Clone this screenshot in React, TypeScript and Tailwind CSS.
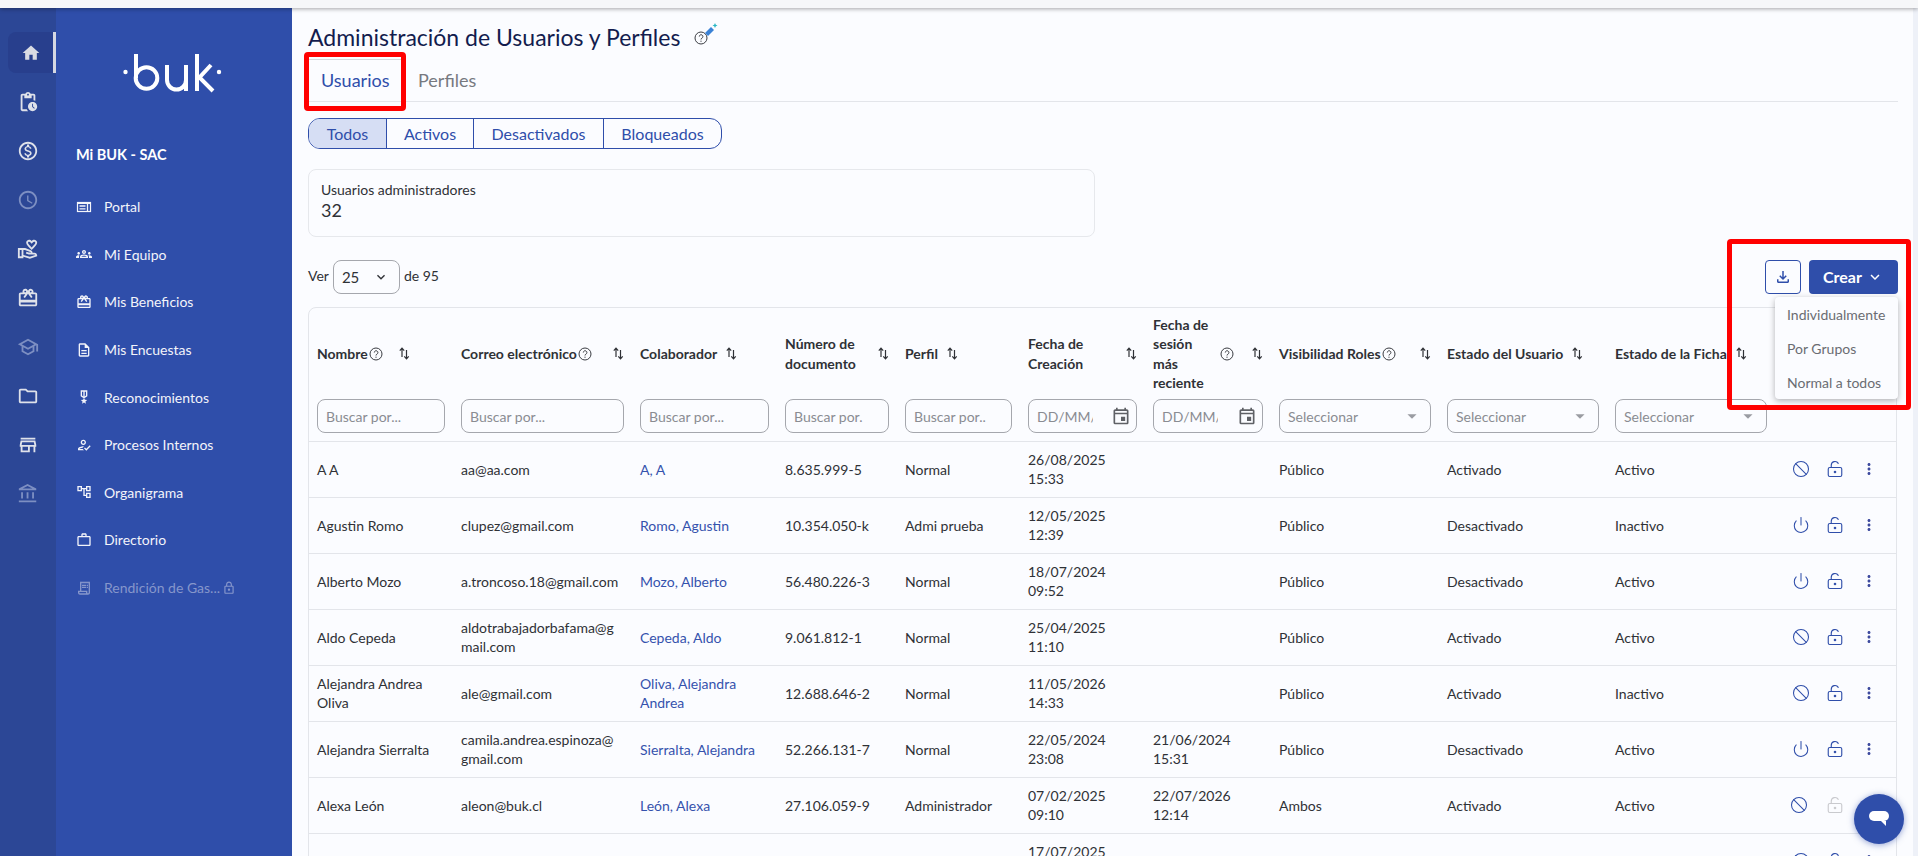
import React from 'react';
import {
  MdHome,
  MdOutlinePendingActions,
  MdOutlineMonetizationOn,
  MdOutlineAccessTime,
  MdOutlineVolunteerActivism,
  MdOutlineCardGiftcard,
  MdOutlineSchool,
  MdOutlineFolder,
  MdOutlineStore,
  MdOutlineAccountBalance,
  MdOutlineGroups,
  MdOutlineDescription,
  MdOutlineMilitaryTech,
  MdOutlineHowToReg,
  MdOutlineAccountTree,
  MdOutlineWorkOutline,
  MdOutlineReceiptLong,
  MdOutlineLock,
  MdMoreVert,
  MdOutlineEvent,
  MdOutlineFileDownload,
  MdKeyboardArrowDown,
  MdArrowDropDown,
} from 'react-icons/md';
import { Ban, Power, LockKeyholeOpen } from 'lucide-react';

const railIcons = [
  { Icon: MdOutlinePendingActions, dim: false },
  { Icon: MdOutlineMonetizationOn, dim: false },
  { Icon: MdOutlineAccessTime, dim: true },
  { Icon: MdOutlineVolunteerActivism, dim: false },
  { Icon: MdOutlineCardGiftcard, dim: false },
  { Icon: MdOutlineSchool, dim: true },
  { Icon: MdOutlineFolder, dim: false },
  { Icon: MdOutlineStore, dim: false },
  { Icon: MdOutlineAccountBalance, dim: true },
];

function PortalIcon({ className = '' }: { size?: number; className?: string }) {
  return (
    <svg width="16" height="16" viewBox="0 0 16 16" fill="none" stroke="currentColor" className={className}>
      <rect x="1.5" y="3.5" width="13" height="9" strokeWidth="1.2" />
      <path d="M1.5 4.2h13" strokeWidth="1.6" />
      <path d="M3.5 7h6M3.5 9.8h6M11.5 5v7" strokeWidth="1.3" />
    </svg>
  );
}

const menuItems = [
  { label: 'Portal', Icon: PortalIcon },
  { label: 'Mi Equipo', Icon: MdOutlineGroups },
  { label: 'Mis Beneficios', Icon: MdOutlineCardGiftcard },
  { label: 'Mis Encuestas', Icon: MdOutlineDescription },
  { label: 'Reconocimientos', Icon: MdOutlineMilitaryTech },
  { label: 'Procesos Internos', Icon: MdOutlineHowToReg },
  { label: 'Organigrama', Icon: MdOutlineAccountTree },
  { label: 'Directorio', Icon: MdOutlineWorkOutline },
];

const rows = [
  { n: 'A A', e: 'aa@aa.com', c: 'A, A', d: '8.635.999-5', p: 'Normal', f: ['26/08/2025', '15:33'], s: [], v: 'Público', u: 'Activado', h: 'Activo', block: true },
  { n: 'Agustin Romo', e: 'clupez@gmail.com', c: 'Romo, Agustin', d: '10.354.050-k', p: 'Admi prueba', f: ['12/05/2025', '12:39'], s: [], v: 'Público', u: 'Desactivado', h: 'Inactivo', block: false },
  { n: 'Alberto Mozo', e: 'a.troncoso.18@gmail.com', c: 'Mozo, Alberto', d: '56.480.226-3', p: 'Normal', f: ['18/07/2024', '09:52'], s: [], v: 'Público', u: 'Desactivado', h: 'Activo', block: false },
  { n: 'Aldo Cepeda', e: 'aldotrabajadorbafama@g\nmail.com', c: 'Cepeda, Aldo', d: '9.061.812-1', p: 'Normal', f: ['25/04/2025', '11:10'], s: [], v: 'Público', u: 'Activado', h: 'Activo', block: true },
  { n: 'Alejandra Andrea Oliva', e: 'ale@gmail.com', c: 'Oliva, Alejandra Andrea', d: '12.688.646-2', p: 'Normal', f: ['11/05/2026', '14:33'], s: [], v: 'Público', u: 'Activado', h: 'Inactivo', block: true },
  { n: 'Alejandra Sierralta', e: 'camila.andrea.espinoza@\ngmail.com', c: 'Sierralta, Alejandra', d: '52.266.131-7', p: 'Normal', f: ['22/05/2024', '23:08'], s: ['21/06/2024', '15:31'], v: 'Público', u: 'Desactivado', h: 'Activo', block: false },
  { n: 'Alexa León', e: 'aleon@buk.cl', c: 'León, Alexa', d: '27.106.059-9', p: 'Administrador', f: ['07/02/2025', '09:10'], s: ['22/07/2026', '12:14'], v: 'Ambos', u: 'Activado', h: 'Activo', block: true, locked: true },
];

function BukLogo() {
  return (
    <svg width="104" height="45" viewBox="0 0 104 45" fill="none" stroke="white" strokeWidth="4">
      <circle cx="2.5" cy="22" r="2.2" fill="white" stroke="none" />
      <path d="M13 4v24" />
      <circle cx="23.5" cy="28" r="10.8" />
      <path d="M44 15v15a9.5 9.5 0 0 0 19 0V15M63 30v11" />
      <path d="M74 4v37M88 15 76.5 27.5 90 41" />
      <circle cx="96" cy="22" r="2.2" fill="white" stroke="none" />
    </svg>
  );
}

function SortIcon({ className = '' }: { className?: string }) {
  return (
    <svg width="12" height="13" viewBox="0 0 12 13" fill="none" stroke="#2f3136" strokeWidth="1.2" className={`shrink-0 ${className}`}>
      <path d="M4 10V1.5M1.8 3.6 4 1.2l2.2 2.4" />
      <path d="M8.5 3v8.5M6.3 9.4l2.2 2.4 2.2-2.4" />
    </svg>
  );
}

function HelpIcon() {
  return (
    <svg width="14" height="14" viewBox="0 0 14 14" fill="none" stroke="#3a3c42" strokeWidth="1" className="shrink-0">
      <circle cx="7" cy="7" r="6" />
      <path d="M5.3 5.5a1.8 1.8 0 1 1 2.7 1.6c-.7.4-1 .7-1 1.4" />
      <circle cx="7" cy="10.2" r=".6" fill="#3a3c42" stroke="none" />
    </svg>
  );
}

function Head({ lines, help, spreadHelp, sortNear }: { lines: string[]; help?: boolean; spreadHelp?: boolean; sortNear?: number }) {
  return (
    <div className={`flex items-center ${sortNear === undefined ? 'justify-between' : ''}`}>
      <span className={`flex items-center gap-px ${spreadHelp ? 'flex-1 justify-between mr-[17px]' : ''}`}>
        <span className="leading-[19.5px]">
          {lines.map(l => (
            <span key={l} className="block whitespace-nowrap">{l}</span>
          ))}
        </span>
        {help && <HelpIcon />}
      </span>
      <SortIcon className={sortNear === 8 ? 'ml-[8px]' : sortNear === 15 ? 'ml-[15px]' : ''} />
    </div>
  );
}

function TextFilter({ placeholder = 'Buscar por...' }: { placeholder?: string }) {
  return (
    <div className="h-[34px] rounded-lg border border-[#a5a7ad] px-[8px] flex items-center text-[14px] text-[#8a8c92] overflow-hidden whitespace-nowrap">
      {placeholder}
    </div>
  );
}

function DateFilter() {
  return (
    <div className="h-[34px] rounded-lg border border-[#a5a7ad] pl-[8px] pr-[5px] flex items-center justify-between text-[14px] text-[#8a8c92]">
      <span className="w-[56px] overflow-hidden whitespace-nowrap">DD/MM/YYYY</span>
      <MdOutlineEvent size={20} className="text-[#5f6166]" />
    </div>
  );
}

function SelectFilter() {
  return (
    <div className="h-[34px] rounded-lg border border-[#a5a7ad] pl-[8px] pr-[7px] flex items-center justify-between text-[14px] text-[#8a8c92]">
      <span>Seleccionar</span>
      <MdArrowDropDown size={22} className="text-[#9a9ca2]" />
    </div>
  );
}

function TwoLines({ lines }: { lines: string[] }) {
  return (
    <>
      {lines.map((l, i) => (
        <span key={i} className="block">{l}</span>
      ))}
    </>
  );
}

function Actions({ block, locked }: { block: boolean; locked?: boolean }) {
  const MainIcon = block ? Ban : Power;
  return (
    <div className="flex items-center pl-[17px]">
      <MainIcon size={18} strokeWidth={1.4} className={`text-[#2f4eaa] ${locked ? '-ml-[2px] mr-[2px]' : ''}`} />
      <LockKeyholeOpen size={18} strokeWidth={1.5} className={`ml-[16px] ${locked ? 'text-[#c9cace]' : 'text-[#2f4eaa]'}`} />
      {!locked && <MdMoreVert size={18} className="ml-[16px] text-[#3d4a9e]" />}
    </div>
  );
}

export default function App() {
  const cell = 'px-2 align-middle border-t border-[#e3e5ea] font-normal leading-[19px] text-left';
  const headCell = 'px-2 font-bold';
  const filterCell = 'px-2 font-normal text-left';
  return (
    <div className="relative h-[856px] w-full overflow-hidden bg-[#fbfcff] text-[14px] text-[#2f3136] font-['Lato','Noto_Sans',sans-serif]">
      {/* Browser strip */}
      <div className="h-2 bg-[#f6f7f9] shadow-[0_1px_4px_rgba(0,0,0,0.35)] relative z-10" />

      <div className="flex h-[848px]">
        {/* Icon rail */}
        <aside className="w-14 shrink-0 bg-[#2c4796] flex flex-col items-center pt-6">
          <div className="relative h-[41px] w-12 ml-2 self-start rounded-l-lg bg-[#283f8d] flex items-center justify-center border-r-[3px] border-[#d5d8e2]">
            <MdHome size={20} className="text-[#d9dbe3]" />
          </div>
          <div className="mt-[4px] flex flex-col">
            {railIcons.map(({ Icon, dim }, i) => (
              <div key={i} className="h-[49px] w-14 flex items-center justify-center">
                <Icon size={22} className={dim ? 'text-[#7d8fc2]' : 'text-[#dfe2ea]'} />
              </div>
            ))}
          </div>
        </aside>

        {/* Menu */}
        <aside className="w-[236px] shrink-0 bg-[#2f4eaa] text-white">
          <div className="pl-[67px] pt-[42px]">
            <BukLogo />
          </div>
          <div className="pl-5 pt-[50px] text-[14.5px] font-bold leading-[20px]">Mi BUK - SAC</div>
          <nav className="mt-[18px] pl-5">
            {menuItems.map(({ label, Icon }) => (
              <div key={label} className="h-[47.6px] flex items-center text-[14px] text-[#f3f4fa]">
                <Icon size={16} className="w-4 shrink-0" />
                <span className="ml-3">{label}</span>
              </div>
            ))}
            <div className="h-[47.6px] flex items-center text-[14px] text-[#8696cb]">
              <MdOutlineReceiptLong size={16} className="w-4 shrink-0" />
              <span className="ml-3">Rendición de Gas...</span>
              <MdOutlineLock size={14} className="ml-[2px]" />
            </div>
          </nav>
        </aside>

        {/* Content */}
        <main className="flex-1 min-w-0 pl-4 pr-[15px] pt-[16px]">
          <div className="flex items-center h-[26px]">
            <h1 className="text-[23px] leading-[26px] text-[#131c4e] font-normal">Administración de Usuarios y Perfiles</h1>
            <span className="relative ml-[14px] mt-[2px]">
              <HelpIcon />
              <svg width="14" height="14" viewBox="0 0 14 14" className="absolute -top-[8px] left-[10px]">
                <path d="M1 10 7 4l3 3-6 6z" fill="#3b82d6" />
                <path d="M11 0l.8 1.7 1.7.8-1.7.8-.8 1.7-.8-1.7-1.7-.8 1.7-.8z" fill="#2ab7c4" />
              </svg>
            </span>
          </div>

          <div className="mt-[9px] h-[43px] flex border-b border-[#e3e5ea] text-[18px]">
            <div className="w-[97px] pl-[13px] flex items-center border-t border-[#d5d7dc] text-[#2f4eaa]">Usuarios</div>
            <div className="pl-[13px] flex items-center text-[#77797f]">Perfiles</div>
          </div>

          <div className="mt-4 flex">
            <div className="flex h-[31px] rounded-xl border border-[#2f4eaa] overflow-hidden text-[16px] text-[#2f4eaa]">
              <div className="w-[77px] flex items-center justify-center bg-[#d6def4]">Todos</div>
              <div className="w-[87px] flex items-center justify-center border-l border-[#2f4eaa]">Activos</div>
              <div className="w-[130px] flex items-center justify-center border-l border-[#2f4eaa]">Desactivados</div>
              <div className="w-[118px] flex items-center justify-center border-l border-[#2f4eaa]">Bloqueados</div>
            </div>
          </div>

          <div className="mt-[20px] w-[787px] h-[68px] rounded-lg border border-[#e6e8ec] px-3 pt-[11px]">
            <div className="text-[14px] leading-[18px]">Usuarios administradores</div>
            <div className="text-[18px] leading-[23px]">32</div>
          </div>

          <div className="mt-[23px] h-[34px] flex items-center justify-between">
            <div className="flex items-center text-[14px]">
              <span className="-mt-1">Ver</span>
              <div className="ml-[4px] w-[67px] h-[34px] rounded-lg border border-[#a5a7ad] pl-2 pr-[10px] flex items-center justify-between text-[15px]">
                <span>25</span>
                <MdKeyboardArrowDown size={16} />
              </div>
              <span className="ml-1 -mt-1">de 95</span>
            </div>
            <div className="flex items-center">
              <div className="w-9 h-[34px] rounded border border-[#2f4eaa] flex items-center justify-center">
                <MdOutlineFileDownload size={18} className="text-[#2f4eaa]" />
              </div>
              <div className="ml-2 w-[89px] h-[34px] rounded bg-[#2f4eaa] text-white flex items-center justify-center text-[16px] font-bold">
                Crear
                <MdKeyboardArrowDown size={18} className="ml-1" />
              </div>
            </div>
          </div>

          {/* Table */}
          <div className="mt-[13px] w-[1589px] rounded-t-lg border border-[#e3e5ea]">
            <table className="w-full table-fixed border-collapse">
              <colgroup>
                <col className="w-[144px]" />
                <col className="w-[179px]" />
                <col className="w-[145px]" />
                <col className="w-[120px]" />
                <col className="w-[123px]" />
                <col className="w-[125px]" />
                <col className="w-[126px]" />
                <col className="w-[168px]" />
                <col className="w-[168px]" />
                <col className="w-[168px]" />
                <col />
              </colgroup>
              <thead>
                <tr className="h-[91px] text-left">
                  <th className={headCell}><Head lines={['Nombre']} help sortNear={15} /></th>
                  <th className={headCell}><Head lines={['Correo electrónico']} help /></th>
                  <th className={headCell}><Head lines={['Colaborador']} sortNear={8} /></th>
                  <th className={headCell}><Head lines={['Número de', 'documento']} /></th>
                  <th className={headCell}><Head lines={['Perfil']} sortNear={8} /></th>
                  <th className={headCell}><Head lines={['Fecha de', 'Creación']} /></th>
                  <th className={headCell}><Head lines={['Fecha de', 'sesión', 'más', 'reciente']} help spreadHelp /></th>
                  <th className={headCell}><Head lines={['Visibilidad Roles']} help /></th>
                  <th className={headCell}><Head lines={['Estado del Usuario']} sortNear={8} /></th>
                  <th className={headCell}><Head lines={['Estado de la Ficha']} sortNear={8} /></th>
                  <th />
                </tr>
                <tr className="h-[42px] align-top">
                  <th className={filterCell}><TextFilter /></th>
                  <th className={filterCell}><TextFilter /></th>
                  <th className={filterCell}><TextFilter /></th>
                  <th className={filterCell}><TextFilter placeholder="Buscar por." /></th>
                  <th className={filterCell}><TextFilter placeholder="Buscar por.." /></th>
                  <th className={filterCell}><DateFilter /></th>
                  <th className={filterCell}><DateFilter /></th>
                  <th className={filterCell}><SelectFilter /></th>
                  <th className={filterCell}><SelectFilter /></th>
                  <th className={filterCell}><SelectFilter /></th>
                  <th />
                </tr>
              </thead>
              <tbody>
                {rows.map(r => (
                  <tr key={r.n} className="h-[56px]">
                    <td className={cell}>{r.n}</td>
                    <td className={`${cell} whitespace-pre-line`}>{r.e}</td>
                    <td className={`${cell} text-[#3552ad]`}>{r.c}</td>
                    <td className={cell}>{r.d}</td>
                    <td className={cell}>{r.p}</td>
                    <td className={cell}><TwoLines lines={r.f} /></td>
                    <td className={cell}><TwoLines lines={r.s} /></td>
                    <td className={cell}>{r.v}</td>
                    <td className={cell}>{r.u}</td>
                    <td className={cell}>{r.h}</td>
                    <td className={cell + ' !px-0'}><Actions block={r.block} locked={r.locked} /></td>
                  </tr>
                ))}
                {/* Fila cortada por el borde inferior */}
                <tr className="h-[56px]">
                  <td className={cell} colSpan={5} />
                  <td className={cell}><TwoLines lines={['17/07/2025', '\u00a0']} /></td>
                  <td className={cell} colSpan={4} />
                  <td className={cell + ' !px-0'}><Actions block /></td>
                </tr>
              </tbody>
            </table>
          </div>
        </main>

        {/* Scroll track */}
        <div className="w-[5px] shrink-0 bg-[#eef1f8]" />
      </div>

      {/* Dropdown del boton Crear */}
      <div className="absolute left-[1775px] top-[297px] w-[123px] h-[102px] rounded bg-[#fbfcff] shadow-[0_2px_6px_rgba(0,0,0,0.3)] text-[14px] text-[#6a6c72] pl-3 z-20">
        <div className="h-[34px] flex items-center">Individualmente</div>
        <div className="h-[34px] flex items-center">Por Grupos</div>
        <div className="h-[34px] flex items-center">Normal a todos</div>
      </div>

      {/* Marcas rojas */}
      <div className="absolute left-[304px] top-[52px] w-[102px] h-[59px] rounded-sm border-[5px] border-[#ff0000] z-30" />
      <div className="absolute left-[1727px] top-[239px] w-[184px] h-[171px] rounded-sm border-[5px] border-[#ff0000] z-30" />

      {/* Chat */}
      <div className="absolute left-[1854px] top-[794px] w-[50px] h-[50px] rounded-full bg-[#2f4eaa] shadow-[0_1px_6px_rgba(47,78,170,0.5)] flex items-center justify-center z-30">
        <svg width="22" height="18" viewBox="0 0 22 18">
          <rect x="1" y="1" width="20" height="10" rx="5" fill="white" />
          <path d="M13 11h5v5z" fill="white" />
        </svg>
      </div>
    </div>
  );
}
